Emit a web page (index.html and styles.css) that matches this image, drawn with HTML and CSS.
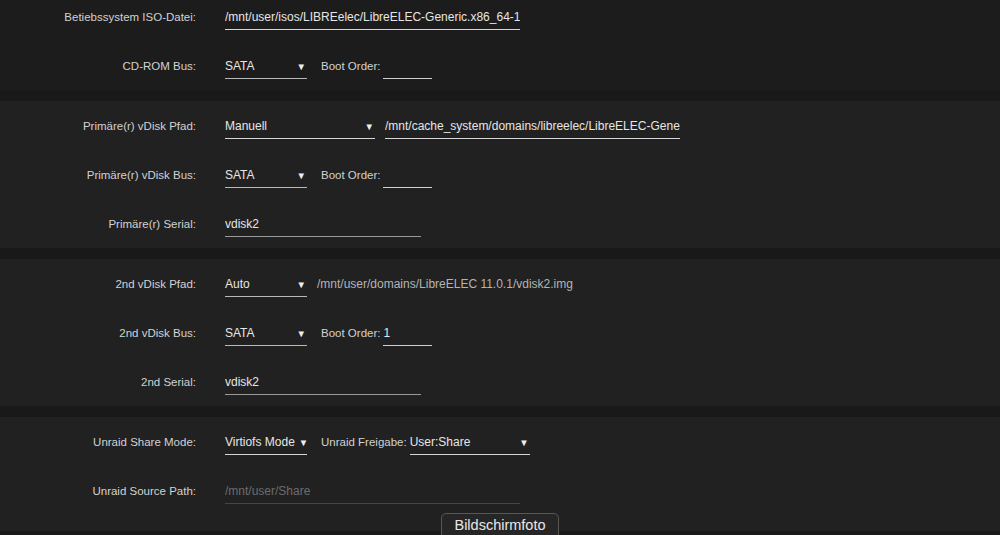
FILE: index.html
```html
<!DOCTYPE html>
<html lang="de">
<head>
    <meta charset="UTF-8">
    <meta name="viewport" content="width=device-width, initial-scale=1.0">
    <title>VM bearbeiten</title>
    <link rel="stylesheet" href="styles.css">
</head>
<body>
    <form class="vm-form">
        <div class="section first">
            <div class="row">
                <label class="label">Betiebssystem ISO-Datei:</label>
                <div class="controls">
                    <input class="field wide bright" type="text" value="/mnt/user/isos/LIBREelec/LibreELEC-Generic.x86_64-11.0.1.img">
                </div>
            </div>
            <div class="row">
                <label class="label">CD-ROM Bus:</label>
                <div class="controls">
                    <div class="select small"><span class="value">SATA</span><span class="arrow">▼</span></div>
                    <span class="inline-label">Boot Order:</span>
                    <input class="field order" type="text" value="">
                </div>
            </div>
        </div>

        <div class="section">
            <div class="row">
                <label class="label">Primäre(r) vDisk Pfad:</label>
                <div class="controls">
                    <div class="select medium bright"><span class="value">Manuell</span><span class="arrow">▼</span></div>
                    <input class="field wide bright" type="text" value="/mnt/cache_system/domains/libreelec/LibreELEC-Generic.img">
                </div>
            </div>
            <div class="row">
                <label class="label">Primäre(r) vDisk Bus:</label>
                <div class="controls">
                    <div class="select small"><span class="value">SATA</span><span class="arrow">▼</span></div>
                    <span class="inline-label">Boot Order:</span>
                    <input class="field order" type="text" value="">
                </div>
            </div>
            <div class="row">
                <label class="label">Primäre(r) Serial:</label>
                <div class="controls">
                    <input class="field serial" type="text" value="vdisk2">
                </div>
            </div>
        </div>

        <div class="section">
            <div class="row">
                <label class="label">2nd vDisk Pfad:</label>
                <div class="controls">
                    <div class="select small"><span class="value">Auto</span><span class="arrow">▼</span></div>
                    <span class="path">/mnt/user/domains/LibreELEC 11.0.1/vdisk2.img</span>
                </div>
            </div>
            <div class="row">
                <label class="label">2nd vDisk Bus:</label>
                <div class="controls">
                    <div class="select small"><span class="value">SATA</span><span class="arrow">▼</span></div>
                    <span class="inline-label">Boot Order:</span>
                    <input class="field order" type="text" value="1">
                </div>
            </div>
            <div class="row">
                <label class="label">2nd Serial:</label>
                <div class="controls">
                    <input class="field serial" type="text" value="vdisk2">
                </div>
            </div>
        </div>

        <div class="section last">
            <div class="row">
                <label class="label">Unraid Share Mode:</label>
                <div class="controls">
                    <div class="select small bright"><span class="value">Virtiofs Mode</span><span class="arrow">▼</span></div>
                    <span class="inline-label">Unraid Freigabe:</span>
                    <div class="select share bright"><span class="value">User:Share</span><span class="arrow">▼</span></div>
                </div>
            </div>
            <div class="row">
                <label class="label">Unraid Source Path:</label>
                <div class="controls">
                    <input class="field wide muted" type="text" placeholder="/mnt/user/Share">
                </div>
            </div>
        </div>
    </form>

    <div class="screenshot-tip">Bildschirmfoto</div>
</body>
</html>
```

FILE: styles.css
```css
body {
    margin: 0;
    background: #191919;
    font-family: "Liberation Sans", Arial, sans-serif;
    font-size: 11.5px;
    color: #e6e6e6;
    overflow: hidden;
}
.vm-form {
    display: flex;
    flex-direction: column;
    gap: 11px;
}
.section {
    background: #212121;
}
.section.first {
    background: #1c1c1c;
    margin-top: -8px;
}
.section.last {
    padding-bottom: 16px;
}
.row {
    display: grid;
    grid-template-columns: 196px 1fr;
    column-gap: 29px;
    height: 49px;
    align-items: center;
}
.label {
    text-align: right;
    color: #d2d2d2;
}
.controls {
    display: flex;
    align-items: center;
    height: 26px;
}
.field {
    box-sizing: border-box;
    height: 26px;
    padding: 2px 0 0;
    border: none;
    border-bottom: 1px solid #9a9a9a;
    background: transparent;
    color: #e6e6e6;
    font: inherit;
    font-size: 12px;
    outline: none;
}
.field.bright {
    border-bottom-color: #d6d6d6;
}
.field.muted {
    border-bottom-color: #454545;
}
.field::placeholder {
    color: #6c6c6c;
}
.field.wide {
    width: 295px;
}
.field.serial {
    width: 196px;
}
.field.order {
    width: 49px;
    margin-left: 3px;
    border-bottom-color: #cfcfcf;
}
.select {
    box-sizing: border-box;
    display: flex;
    align-items: center;
    justify-content: space-between;
    gap: 4px;
    height: 26px;
    padding-top: 2px;
    font-size: 12px;
    border-bottom: 1px solid #b8b8b8;
}
.select.bright {
    border-bottom-color: #d6d6d6;
}
.select.small {
    width: 82px;
}
.select.medium {
    width: 150px;
    margin-right: 10px;
}
.select.share {
    width: 120px;
    margin-left: 3px;
}
.value {
    white-space: nowrap;
}
.arrow {
    font-size: 9.5px;
    padding-right: 1px;
    color: #eee;
}
.inline-label {
    margin-left: 14px;
    color: #d2d2d2;
}
.path {
    margin-left: 10px;
    font-size: 12px;
    color: #b4b4b4;
}
.screenshot-tip {
    position: absolute;
    left: 441px;
    top: 513px;
    width: 118px;
    height: 30px;
    box-sizing: border-box;
    padding-top: 3px;
    border: 1px solid #575757;
    border-radius: 5px;
    background: #262626;
    color: #e8e8e8;
    font-size: 14.5px;
    text-align: center;
}
```
